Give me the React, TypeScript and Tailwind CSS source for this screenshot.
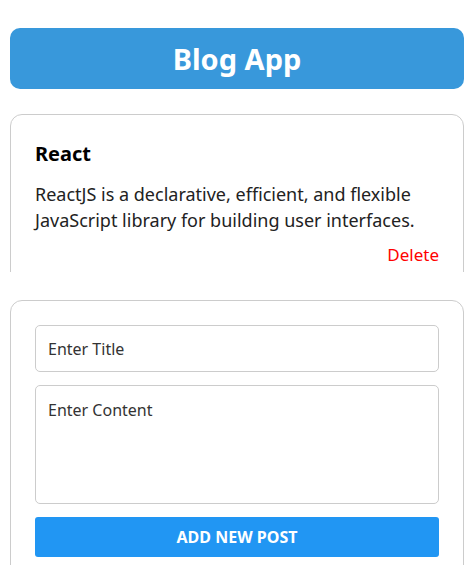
import { useState } from "react";

type Post = { id: number; title: string; content: string };

const initialPosts: Post[] = [
  {
    id: 1,
    title: "React",
    content:
      "ReactJS is a declarative, efficient, and flexible JavaScript library for building user interfaces.",
  },
];

export default function App() {
  const [posts, setPosts] = useState<Post[]>(initialPosts);
  const [title, setTitle] = useState("");
  const [content, setContent] = useState("");

  const addPost = () => {
    if (!title.trim()) return;
    setPosts([...posts, { id: Date.now(), title, content }]);
    setTitle("");
    setContent("");
  };

  return (
    <div className="min-h-screen bg-white px-[10px] pt-[28px] font-['Noto_Sans',sans-serif] text-[#222]">
      <header className="flex h-[61px] items-center justify-center rounded-[10px] bg-[#3898db]">
        <h1 className="text-[29px] font-bold text-white">Blog App</h1>
      </header>

      <div className="mt-[25px] h-[158px] overflow-hidden">
        {posts.map((post) => (
          <div
            key={post.id}
            className="mb-4 rounded-[12px] border border-[#cccccc] px-[24px] pt-[24px] pb-[20px]"
          >
            <h2 className="text-[20px] font-bold leading-[30px] text-black">
              {post.title}
            </h2>
            <p className="mt-[12px] text-[18px] leading-[26px] text-[#222]">
              {post.content}
            </p>
            <div className="mt-[9px] flex justify-end">
              <button
                onClick={() => setPosts(posts.filter((p) => p.id !== post.id))}
                className="text-[17px] text-[#ff0000]"
              >
                Delete
              </button>
            </div>
          </div>
        ))}
      </div>

      <div className="mt-[28px] rounded-[12px] border border-[#cccccc] p-[24px]">
        <input
          value={title}
          onChange={(e) => setTitle(e.target.value)}
          placeholder="Enter Title"
          className="h-[47px] w-full rounded-[5px] border border-[#cccccc] px-[12px] text-[16px] outline-none placeholder:text-[#333]"
        />
        <textarea
          value={content}
          onChange={(e) => setContent(e.target.value)}
          placeholder="Enter Content"
          className="mt-[13px] block h-[119px] w-full resize-none rounded-[5px] border border-[#cccccc] px-[12px] py-[12px] text-[16px] outline-none placeholder:text-[#333]"
        />
        <button
          onClick={addPost}
          className="mt-[13px] h-[40px] w-full rounded-[3px] bg-[#2196f3] text-[16px] font-bold uppercase text-white"
        >
          Add New Post
        </button>
      </div>
    </div>
  );
}
